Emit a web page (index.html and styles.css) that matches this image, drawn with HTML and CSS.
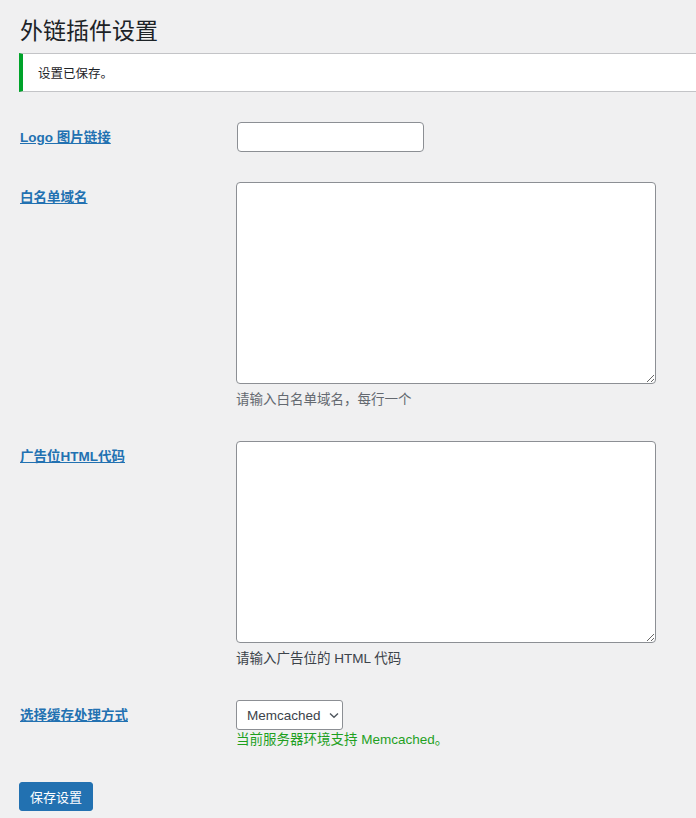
FILE: index.html
```html
<!DOCTYPE html>
<html lang="zh-CN">
<head>
<meta charset="utf-8">
<title>外链插件设置</title>
<link rel="stylesheet" href="styles.css">
</head>
<body>
<div class="wrap">
  <h1 class="title">外链插件设置</h1>
  <div class="notice"><p>设置已保存。</p></div>
  <form class="form">
    <div class="row">
      <div class="th"><a class="label" href="#">Logo 图片链接</a></div>
      <div class="td"><input class="text-input" type="text"></div>
    </div>
    <div class="row">
      <div class="th"><a class="label" href="#">白名单域名</a></div>
      <div class="td">
        <textarea class="area"></textarea>
        <p class="desc">请输入白名单域名，每行一个</p>
      </div>
    </div>
    <div class="row">
      <div class="th"><a class="label" href="#">广告位HTML代码</a></div>
      <div class="td">
        <textarea class="area"></textarea>
        <p class="desc dark">请输入广告位的 HTML 代码</p>
      </div>
    </div>
    <div class="row">
      <div class="th"><a class="label" href="#">选择缓存处理方式</a></div>
      <div class="td">
        <div class="select">
          <span class="sel-text">Memcached</span>
          <svg class="chev" width="10" height="7" viewBox="0 0 10 7"><path d="M1 1.5 L5 5.2 L9 1.5" fill="none" stroke="#50575e" stroke-width="1.4"/></svg>
        </div>
        <p class="ok">当前服务器环境支持 Memcached。</p>
      </div>
    </div>
    <div class="submit"><button type="button" class="btn">保存设置</button></div>
  </form>
</div>
</body>
</html>
```
FILE: styles.css
```css
html, body {
  margin: 0;
  padding: 0;
  background: #f0f0f1;
  color: #3c434a;
  font-family: "Liberation Sans", "Noto Sans CJK SC", sans-serif;
  font-size: 14px;
}
.wrap {
  padding-left: 19px;
  height: 818px;
  overflow: hidden;
}
.title {
  margin: 0;
  padding: 16px 0 0 1px;
  font-size: 23px;
  line-height: 30px;
  font-weight: 400;
  color: #1d2327;
  height: 37px;
}
.notice {
  background: #fff;
  border-top: 1px solid #c3c4c7;
  border-bottom: 1px solid #c3c4c7;
  border-left: 4px solid #00a32a;
  height: 37px;
  display: flex;
  align-items: center;
  padding-left: 15px;
}
.notice p {
  margin: 0;
  font-size: 12.5px;
  color: #1d2327;
}
.form {
  padding-top: 15px;
}
.row {
  display: flex;
}
.th {
  width: 217px;
  flex: none;
  padding: 21px 0 0 1px;
  box-sizing: border-box;
}
.label {
  display: block;
  line-height: 20px;
  color: #2271b1;
  font-weight: 600;
  font-size: 13.5px;
  text-decoration: underline;
}
.td {
  padding: 15px 0 15px 0;
}
.text-input {
  display: block;
  box-sizing: border-box;
  width: 187px;
  height: 30px;
  margin: 0 0 0 1px;
  border: 1px solid #8c8f94;
  border-radius: 4px;
  background: #fff;
}
.area {
  display: block;
  box-sizing: border-box;
  width: 420px;
  height: 202px;
  margin: 0;
  border: 1px solid #8c8f94;
  border-radius: 4px;
  background: #fff;
  resize: both;
}
.desc {
  margin: 6px 0 1px;
  line-height: 20px;
  font-size: 13.5px;
  color: #646970;
}
.desc.dark {
  color: #3c434a;
}
.select {
  box-sizing: border-box;
  width: 107px;
  height: 30px;
  border: 1px solid #8c8f94;
  border-radius: 3px;
  background: #fff;
  display: flex;
  align-items: center;
  padding: 0 0 0 10px;
  gap: 8px;
  color: #3c434a;
}
.sel-text {
  font-size: 13.5px;
}
.chev {
  display: block;
}
.ok {
  margin: 0;
  line-height: 20px;
  font-size: 13.5px;
  color: #1fa01f;
}
.submit {
  padding-top: 17px;
}
.btn {
  width: 74px;
  height: 29px;
  border: 1px solid #2271b1;
  border-radius: 3px;
  background: #2271b1;
  color: #fff;
  font-family: "Liberation Sans", "Noto Sans CJK SC", sans-serif;
  font-size: 13px;
  padding: 0;
}
```
